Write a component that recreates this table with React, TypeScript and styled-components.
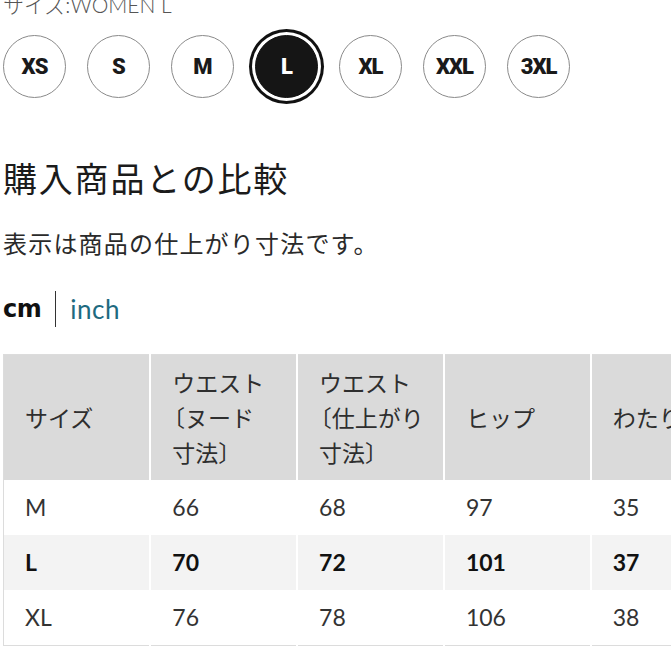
import React from "react";
import styled, { createGlobalStyle } from "styled-components";

const Global = createGlobalStyle`
  html, body { margin: 0; padding: 0; background: #fff; overflow: hidden; }
  body { font-family: "Lato", "Noto Sans CJK JP", sans-serif; color: #1b1b1b; }
`;

const Page = styled.div`
  width: 671px;
  height: 671px;
  overflow: hidden;
  padding-left: 3px;
  box-sizing: border-box;
`;

const SizeLabel = styled.div`
  margin-top: -6px;
  font-size: 21px;
  line-height: 21px;
  color: #555;
  font-family: "Lato", "Noto Sans CJK JP", sans-serif;
  font-weight: 300;
`;

const SizeRow = styled.div`
  display: flex;
  gap: 21px;
  margin-top: 20px;
`;

const SizeChip = styled.div<{ $active?: boolean }>`
  width: 63px;
  height: 63px;
  border-radius: 50%;
  box-sizing: border-box;
  border: 1px solid ${(p) => (p.$active ? "#111" : "#8a8a8a")};
  background: ${(p) => (p.$active ? "#151515" : "#fff")};
  color: ${(p) => (p.$active ? "#fff" : "#1a1a1a")};
  box-shadow: ${(p) => (p.$active ? "0 0 0 3px #fff, 0 0 0 6px #111" : "none")};
  display: flex;
  align-items: center;
  justify-content: center;
  font-family: "Roboto", sans-serif;
  font-weight: 900;
  font-size: 22px;
  letter-spacing: -1px;
`;

const Heading = styled.h2`
  margin: 60px 0 0;
  font-family: "Noto Sans CJK JP", sans-serif;
  font-weight: 400;
  font-size: 34px;
  line-height: 40px;
  letter-spacing: 1.8px;
  color: #1b1b1b;
`;

const Note = styled.p`
  margin: 30px 0 0;
  font-family: "Noto Sans CJK JP", sans-serif;
  font-weight: 400;
  font-size: 24px;
  line-height: 30px;
  letter-spacing: 1.2px;
  color: #2a2a2a;
`;

const UnitRow = styled.div`
  display: flex;
  align-items: center;
  margin-top: 33px;
  height: 36px;
`;

const Unit = styled.span<{ $active?: boolean }>`
  font-family: ${(p) => (p.$active ? '"DejaVu Sans"' : '"Lato"')}, sans-serif;
  font-size: ${(p) => (p.$active ? "24px" : "26px")};
  font-weight: ${(p) => (p.$active ? 700 : 400)};
  letter-spacing: ${(p) => (p.$active ? "-0.5px" : "0.5px")};
  color: ${(p) => (p.$active ? "#111" : "#1e6a80")};
`;

const Divider = styled.span`
  width: 1px;
  height: 36px;
  background: #333;
  margin: 0 14px 0 14px;
`;

const Table = styled.table`
  margin-top: 27px;
  border-collapse: collapse;
  table-layout: fixed;
  width: 735px;
  border: 1px solid #dcdcdc;
  font-family: "Lato", "Noto Sans CJK JP", sans-serif;
`;

const Th = styled.th`
  width: 146px;
  height: 125px;
  box-sizing: border-box;
  background: #dadada;
  border-left: 2px solid #fff;
  text-align: left;
  vertical-align: middle;
  padding: 0 0 0 21px;
  white-space: nowrap;
  overflow: hidden;
  font-family: "Noto Sans CJK JP", sans-serif;
  font-weight: 400;
  font-size: 23px;
  line-height: 35px;
  color: #2e2e2e;
  &:first-child { border-left: none; }
`;

const Bracket = styled.span`
  display: inline-block;
  margin-left: -0.45em;
`;

const Tr = styled.tr<{ $hl?: boolean }>`
  background: ${(p) => (p.$hl ? "#f3f3f3" : "#fff")};
`;

const Td = styled.td<{ $bold?: boolean }>`
  height: 55px;
  padding: 0 0 0 21px;
  border-left: 2px solid #fff;
  font-size: 23px;
  font-weight: ${(p) => (p.$bold ? 700 : 400)};
  color: ${(p) => (p.$bold ? "#111" : "#333")};
  &:first-child { border-left: none; border-right: 1px solid #dcdcdc; }
`;

const sizes = ["XS", "S", "M", "L", "XL", "XXL", "3XL"];

const rows = [
  ["M", "66", "68", "97", "35"],
  ["L", "70", "72", "101", "37"],
  ["XL", "76", "78", "106", "38"],
];

export default function App() {
  return (
    <Page>
      <Global />
      <SizeLabel>サイズ:WOMEN L</SizeLabel>
      <SizeRow>
        {sizes.map((s) => (
          <SizeChip key={s} $active={s === "L"}>
            {s}
          </SizeChip>
        ))}
      </SizeRow>
      <Heading>購入商品との比較</Heading>
      <Note>表示は商品の仕上がり寸法です。</Note>
      <UnitRow>
        <Unit $active>cm</Unit>
        <Divider />
        <Unit>inch</Unit>
      </UnitRow>
      <Table>
        <thead>
          <tr>
            <Th>サイズ</Th>
            <Th>
              ウエスト
              <br />
              <Bracket>〔</Bracket>ヌード
              <br />
              寸法〕
            </Th>
            <Th>
              ウエスト
              <br />
              <Bracket>〔</Bracket>仕上がり
              <br />
              寸法〕
            </Th>
            <Th>ヒップ</Th>
            <Th>わたり幅</Th>
          </tr>
        </thead>
        <tbody>
          {rows.map((r) => (
            <Tr key={r[0]} $hl={r[0] === "L"}>
              {r.map((c, i) => (
                <Td key={i} $bold={r[0] === "L"}>
                  {c}
                </Td>
              ))}
            </Tr>
          ))}
        </tbody>
      </Table>
    </Page>
  );
}
